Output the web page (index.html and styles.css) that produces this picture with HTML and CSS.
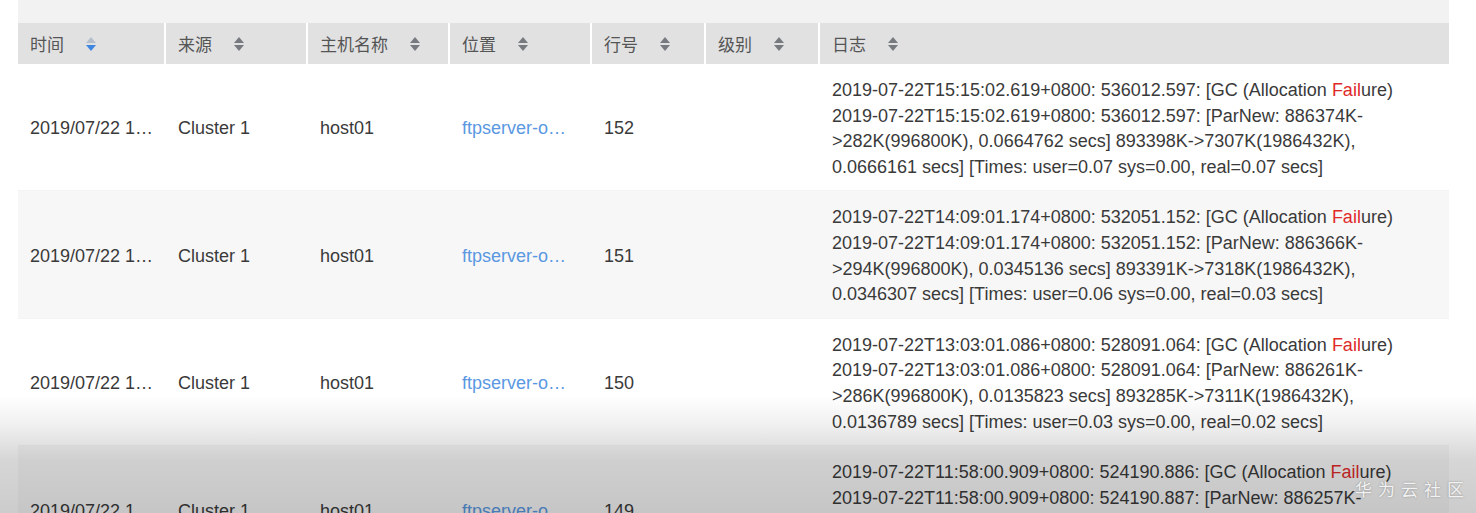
FILE: index.html
```html
<!DOCTYPE html>
<html lang="zh-CN">
<head>
<meta charset="utf-8">
<title>日志</title>
<link rel="stylesheet" href="styles.css">
</head>
<body>
<div class="page">
  <div class="toolbar"></div>
  <div class="table">
    <div class="row head">
      <div class="th">时间<span class="sort active"><i class="up"></i><i class="down"></i></span></div>
      <div class="th">来源<span class="sort"><i class="up"></i><i class="down"></i></span></div>
      <div class="th">主机名称<span class="sort"><i class="up"></i><i class="down"></i></span></div>
      <div class="th">位置<span class="sort"><i class="up"></i><i class="down"></i></span></div>
      <div class="th">行号<span class="sort"><i class="up"></i><i class="down"></i></span></div>
      <div class="th">级别<span class="sort"><i class="up"></i><i class="down"></i></span></div>
      <div class="th">日志<span class="sort"><i class="up"></i><i class="down"></i></span></div>
    </div>

    <div class="row body">
      <div class="td">2019/07/22 1…</div>
      <div class="td">Cluster 1</div>
      <div class="td">host01</div>
      <div class="td link">ftpserver-o…</div>
      <div class="td">152</div>
      <div class="td"></div>
      <div class="td log">2019-07-22T15:15:02.619+0800: 536012.597: [GC (Allocation <em>Fail</em>ure)<br>2019-07-22T15:15:02.619+0800: 536012.597: [ParNew: 886374K-&gt;282K(996800K), 0.0664762 secs] 893398K-&gt;7307K(1986432K), 0.0666161 secs] [Times: user=0.07 sys=0.00, real=0.07 secs]</div>
    </div>

    <div class="row body alt">
      <div class="td">2019/07/22 1…</div>
      <div class="td">Cluster 1</div>
      <div class="td">host01</div>
      <div class="td link">ftpserver-o…</div>
      <div class="td">151</div>
      <div class="td"></div>
      <div class="td log">2019-07-22T14:09:01.174+0800: 532051.152: [GC (Allocation <em>Fail</em>ure)<br>2019-07-22T14:09:01.174+0800: 532051.152: [ParNew: 886366K-&gt;294K(996800K), 0.0345136 secs] 893391K-&gt;7318K(1986432K), 0.0346307 secs] [Times: user=0.06 sys=0.00, real=0.03 secs]</div>
    </div>

    <div class="row body">
      <div class="td">2019/07/22 1…</div>
      <div class="td">Cluster 1</div>
      <div class="td">host01</div>
      <div class="td link">ftpserver-o…</div>
      <div class="td">150</div>
      <div class="td"></div>
      <div class="td log">2019-07-22T13:03:01.086+0800: 528091.064: [GC (Allocation <em>Fail</em>ure)<br>2019-07-22T13:03:01.086+0800: 528091.064: [ParNew: 886261K-&gt;286K(996800K), 0.0135823 secs] 893285K-&gt;7311K(1986432K), 0.0136789 secs] [Times: user=0.03 sys=0.00, real=0.02 secs]</div>
    </div>

    <div class="row body alt">
      <div class="td">2019/07/22 1…</div>
      <div class="td">Cluster 1</div>
      <div class="td">host01</div>
      <div class="td link">ftpserver-o…</div>
      <div class="td">149</div>
      <div class="td"></div>
      <div class="td log">2019-07-22T11:58:00.909+0800: 524190.886: [GC (Allocation <em>Fail</em>ure)<br>2019-07-22T11:58:00.909+0800: 524190.887: [ParNew: 886257K-&gt;290K(996800K), 0.0135000 secs] 893281K-&gt;7315K(1986432K), 0.0136000 secs] [Times: user=0.03 sys=0.00, real=0.02 secs]</div>
    </div>
  </div>
</div>
<div class="shade"></div>
<div class="watermark">华为云社区</div>
</body>
</html>
```

FILE: styles.css
```css
html, body {
  margin: 0;
  padding: 0;
  background: #ffffff;
  height: 513px;
  overflow: hidden;
}

body {
  font-family: "Liberation Sans", Arial, "Noto Sans CJK SC", sans-serif;
  color: #3a3a3a;
  font-size: 18px;
}

.page {
  padding-left: 18px;
  width: 1431px;
}

.toolbar {
  height: 23px;
  background: #f2f2f2;
}

.row {
  display: grid;
  grid-template-columns: 146px 140px 140px 140px 112px 112px 1fr;
  column-gap: 2px;
}

.head {
  height: 41px;
  background: #ffffff;
}

.th {
  background: #e1e1e2;
  display: flex;
  align-items: center;
  padding-left: 12px;
  font-family: "Noto Sans CJK SC", "Liberation Sans", sans-serif;
  font-size: 17px;
  color: #555555;
}

.sort {
  display: inline-flex;
  flex-direction: column;
  gap: 2px;
  margin-left: 22px;
}

.sort i {
  display: block;
  width: 0;
  height: 0;
  border-left: 5px solid transparent;
  border-right: 5px solid transparent;
}

.sort .up {
  border-bottom: 6px solid #777a7e;
}

.sort .down {
  border-top: 6px solid #777a7e;
}

.sort.active .up {
  border-bottom-color: #b4bfcc;
}

.sort.active .down {
  border-top-color: #3f86e0;
}

.body {
  background: #ffffff;
  border-bottom: 1px solid #f4f4f4;
}

.body.alt {
  background: #f7f7f7;
}

.td {
  padding: 14px 6px 10px 12px;
  display: flex;
  align-items: center;
  min-width: 0;
  line-height: 25.6px;
  white-space: nowrap;
}

.link {
  color: #5a98e2;
}

.td.log {
  display: block;
  white-space: normal;
  padding-right: 18px;
}

.log em {
  font-style: normal;
  color: #e02a2a;
}

.shade {
  position: absolute;
  left: 0;
  right: 0;
  top: 395px;
  height: 118px;
  background: linear-gradient(to bottom, rgba(0,0,0,0) 0%, rgba(0,0,0,0.06) 25%, rgba(0,0,0,0.16) 55%, rgba(0,0,0,0.2) 100%);
  pointer-events: none;
}

.watermark {
  position: absolute;
  left: 1355px;
  top: 476px;
  font-family: "Noto Sans CJK SC", sans-serif;
  font-size: 17px;
  letter-spacing: 6px;
  color: #f2f2f2;
  text-shadow: 0 0 2px rgba(0,0,0,0.35);
}
```
